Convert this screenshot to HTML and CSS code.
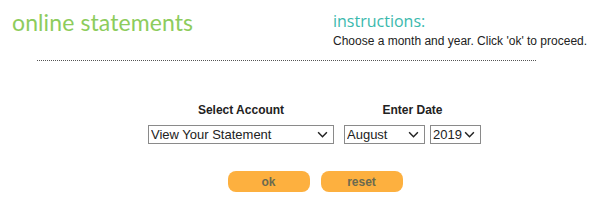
FILE: index.html
```html
<!DOCTYPE html>
<html><head>
<link rel="stylesheet" href="styles.css">
</head>
<body>

<div class="header">
  <h1 class="title">online statements</h1>
  <div class="instructions">
    <h2>instructions:</h2>
    <p>Choose a month and year. Click 'ok' to proceed.</p>
  </div>
</div>
<div class="divider"></div>

<form class="stmt-form">
  <div class="fields">
    <div class="field">
      <label class="field-label">Select Account</label>
      <span class="dropdown">
        <select class="account">
          <option>View Your Statement</option>
        </select>
        <svg class="chevron" viewBox="0 0 12 8"><path d="M1 1.5 L6 6.5 L11 1.5" /></svg>
      </span>
    </div>
    <div class="field">
      <label class="field-label">Enter Date</label>
      <div class="date-row">
        <span class="dropdown">
          <select class="month">
            <option>August</option>
          </select>
          <svg class="chevron" viewBox="0 0 12 8"><path d="M1 1.5 L6 6.5 L11 1.5" /></svg>
        </span>
        <span class="dropdown">
          <select class="year">
            <option>2019</option>
          </select>
          <svg class="chevron" viewBox="0 0 12 8"><path d="M1 1.5 L6 6.5 L11 1.5" /></svg>
        </span>
      </div>
    </div>
  </div>
  <div class="buttons">
    <button type="button" class="btn">ok</button>
    <button type="reset" class="btn">reset</button>
  </div>
</form>

</body>
</html>
```

FILE: styles.css
```css
body {
  margin: 0;
  background: #fff;
  font-family: Arial, "Liberation Sans", sans-serif;
  font-size: 12px;
  color: #222;
}

/* top strip: title and instructions */
.header {
  display: flex;
  align-items: flex-start;
  height: 56px;
}
.title {
  margin: 9px 0 0 12px;
  width: 321px;
  font-family: Lato, sans-serif;
  font-weight: 400;
  font-size: 23px;
  line-height: 26px;
  letter-spacing: 0.1px;
  color: #8dcc5c;
}
.instructions {
  padding-top: 11px;
}
.instructions h2 {
  margin: 0;
  font-family: "Open Sans", sans-serif;
  font-weight: 400;
  font-size: 16px;
  line-height: 21px;
  color: #3ab9ad;
}
.instructions p {
  margin: 2px 0 0;
  line-height: 15px;
}

.divider {
  margin: 4px 0 0 37px;
  width: 499px;
  border-top: 1px dotted #555;
}

/* account / date selection */
.stmt-form {
  margin: 41px 0 0 148px;
  width: 334px;
}
.fields {
  display: flex;
  gap: 10px;
}
.field {
  display: flex;
  flex-direction: column;
  align-items: center;
}
.field-label {
  font-weight: bold;
  line-height: 17px;
  margin-bottom: 6px;
}
.date-row {
  display: flex;
  gap: 5px;
}
.dropdown {
  position: relative;
  display: block;
}
select {
  display: block;
  height: 19px;
  padding: 0 0 0 2px;
  border: 1px solid #8a8a8a;
  border-radius: 0;
  background: #fff;
  font-family: Arial, "Liberation Sans", sans-serif;
  font-size: 13px;
  color: #222;
  appearance: none;
}
.chevron {
  position: absolute;
  right: 6px;
  top: 6px;
  width: 11px;
  height: 7px;
  fill: none;
  stroke: #222;
  stroke-width: 1.7;
  pointer-events: none;
}
.account { width: 186px; }
.month { width: 81px; }
.year { width: 51px; }

.buttons {
  display: flex;
  justify-content: center;
  gap: 11px;
  margin-top: 27px;
}
.btn {
  width: 82px;
  height: 21px;
  border: none;
  border-radius: 8px;
  background: #fdb03f;
  font-family: Arial, "Liberation Sans", sans-serif;
  font-weight: bold;
  font-size: 12px;
  color: #6b6a4f;
  cursor: pointer;
}
```
